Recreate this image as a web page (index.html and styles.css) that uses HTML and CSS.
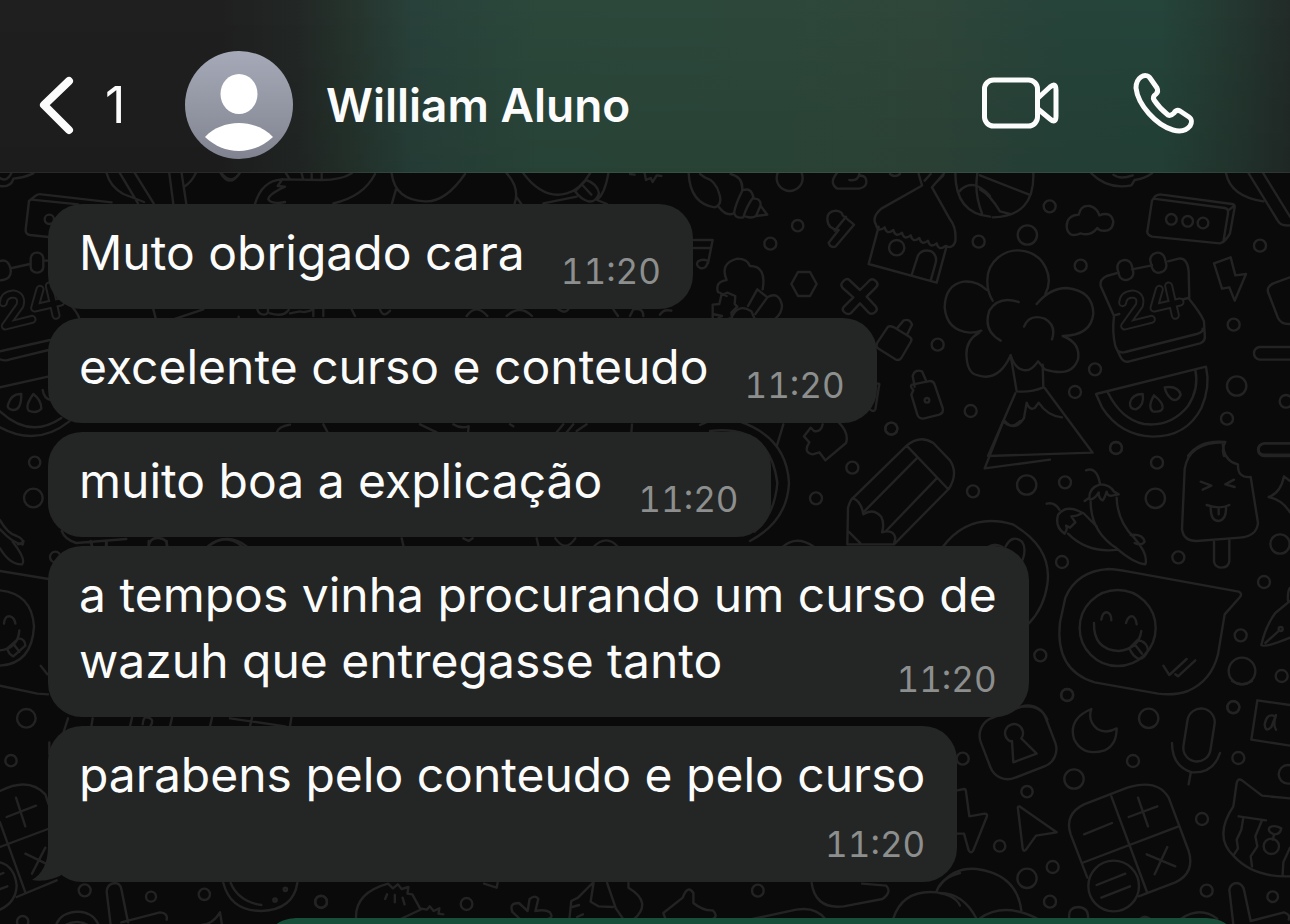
FILE: index.html
```html
<!DOCTYPE html>
<html lang="pt-BR">
<head>
<meta charset="utf-8">
<meta name="viewport" content="width=device-width, initial-scale=1">
<title>William Aluno</title>
<link rel="stylesheet" href="styles.css">
</head>
<body>
<header class="topbar">
  <button class="back" type="button" aria-label="Voltar, 1 conversa">
    <svg class="back-icon" viewBox="39 75 36 60" aria-hidden="true"><path d="M69 81 44 105l25 25"/></svg>
    <span class="back-count">1</span>
  </button>
  <svg class="avatar" viewBox="185 51 108 108" aria-hidden="true">
    <defs><linearGradient id="av" x1="0" y1="0" x2="0" y2="1"><stop offset="0" stop-color="#a6a9b7"/><stop offset="1" stop-color="#818490"/></linearGradient></defs>
    <circle cx="239" cy="105" r="54" fill="url(#av)"/>
    <ellipse cx="239" cy="94" rx="18.5" ry="20" fill="#fff"/>
    <path fill="#fff" d="M205 137C213 128 226 123 239 123S265 128 273 137C263 146 252 151 239 151S215 146 205 137Z"/>
  </svg>
  <h1 class="name">William Aluno</h1>
  <div class="actions">
    <button class="action" type="button" aria-label="Chamada de vídeo">
      <svg class="video-icon" viewBox="981 74 78 62" aria-hidden="true"><rect x="984.5" y="80" width="53" height="46" rx="9"/><path d="M1038 98 1050 87Q1056 82 1056 90V116Q1056 124 1050 119L1038 109"/></svg>
    </button>
    <button class="action" type="button" aria-label="Chamada de voz">
      <svg class="phone-icon" viewBox="1133 74 62 62" aria-hidden="true"><path d="M1141 77C1144 75 1148 75 1150 78L1157 88C1158 90 1158 92 1156 94C1153 96 1153 98 1154 100C1158 106 1163 111 1168 115C1170 116 1172 115 1174 113C1176 110 1178 110 1180 111L1189 117C1192 119 1192 123 1190 126C1186 131 1180 132 1173 130C1156 125 1138 105 1136 88C1136 83 1138 79 1141 77Z"/></svg>
    </button>
  </div>
</header>
<main class="chat">
  <svg class="wallpaper" viewBox="0 0 3870 2256" preserveAspectRatio="xMidYMin slice" aria-hidden="true">
    <!-- left edge, upper -->
    <g transform="translate(0 -21)">
      <path d="M0 36q20 14 34-14M0 60q34 4 40-22 30-2 60-16M320 22q10 40 50 62l62 24M360 22l54 90M405 22l56 90M508 22l12 92M545 22l14 92M553 62q22-14 34-40M665 22q28 36 54 0"/>
      <path d="M145 213l-55-6q-14-2-13-16l10-86 20-16q8-6 18-4l210 24M95 101l140 14"/><circle cx="148" cy="160" r="14"/>
      <path d="M0 285q26-8 32 26 4 30-32 32M36 306l54-12M134 284h14"/><rect x="92" y="260" width="38" height="60" rx="18"/>
      <g transform="translate(-418 0)">
        <path class="digit-outer" d="M428 410q2-24 30-26 28 4 20 34L434 480l80-20M538 370l-16 56 78-18M566 360l20 88"/>
        <path class="digit-inner" d="M428 410q2-24 30-26 28 4 20 34L434 480l80-20M538 370l-16 56 78-18M566 360l20 88"/>
      </g>
      <path d="M0 556l150-34M0 580q16 6 30 0l116-28M0 664l144-32M205 412q26 22 34 48"/>
      <path d="M24 716q10-34 40-32 0 50-26 48-18-4-14-16ZM100 684q-26 36-14 50 24 10 38-6 0-26-24-44ZM128 672q4 26 24 30M0 736q90 84 184 20M0 784q110 60 208-18"/>
      <circle cx="104" cy="889" r="17"/><circle cx="100" cy="996" r="28"/>
      <path d="M0 1062q22 40 50 48 24 10 18 26-30-4-68-46M460 430l8 30M520 460l90-30M716 460v-8M830 800q4-18 40-24M970 775l14 26M185 1095q10 26 44 36l150-12M275 1130v14M320 1125v18M446 1140q4-26 30-24 26 2 26 24M625 1140q50-40 100 0"/>
    </g>
    <!-- left edge, lower -->
    <g transform="translate(0 1104)">
      <path d="M0 22q30 50 66 48 14-14-28-68M54 10q20-8 16-10M0 90l146 24M0 434l112 24 32 2M0 148q96 10 102 108-6 112-102 118M12 248q2-24 18-22 14 4 16 22M0 328q54-6 58-60M22 322l34-30q20 2 20 22l-36 32q-16-8-18-24ZM40 308l18 24M122 374l20 26"/>
      <circle cx="166" cy="48" r="16"/><circle cx="79" cy="532" r="28"/><circle cx="33" cy="659" r="17"/>
      <path d="M272 0l6 20M318 0v20M446 0v18M500 0v18M620 20q60-50 120-4M190 576l14-44M274 556l4-24M390 556l6-26M428 550q2-26 16-20 20 4 8 24M510 556l6-26M630 556l6-26M690 532l166 24M750 556l6-26M870 556l4-26"/>
      <path d="M0 750q86-44 136 10l10 30M0 844l76 210M0 918l144-54M20 828l88-34M48 770l28 86M76 938l62 30M136 920l-40 78M0 964q44 12 50 70-2 50-50 72M0 1000l10-4M0 1044l22-8M50 1068l120-50M148 604v34"/>
      <circle cx="254" cy="1048" r="18"/><circle cx="453" cy="1067" r="15"/><circle cx="613" cy="1060" r="17"/><circle cx="963" cy="1082" r="18"/><circle cx="68" cy="1142" r="17"/>
      <path d="M332 1152l-12-100q2-24 24-26 16 0 20 18l20 100M364 1144l116-30q24 2 20 22M168 1152q14-38 66-40 46 2 62 40M196 1152q36-18 68 0M604 1152q34-2 56-38l6 38M670 1026q22 84 114 84 96-4 108-84M692 1026q24 56 92 66"/><circle cx="825" cy="1077" r="5"/><circle cx="856" cy="1045" r="5"/>
    </g>
    <!-- strip under the header -->
    <g transform="translate(600 -21)">
      <path d="M62 22q28 44 56 0M165 114q20-70 80-74l120 2q60 0 90-20M255 108q-40 8-50-8 0-14 50-38l-22-2 14-20M400 112q90-20 125-88M258 22l10 16M305 22l4 16M335 24v16M365 24v16M575 22q10 80 100 84 60 4 120-82M588 70l-12 42M920 22q40 44 24 90M970 22q60 80 130 60 40-10 70-60M1125 76l34-34q34 12 38 40-10 28-32 24-20-4-40-30ZM1150 60l24 26M1225 22q-10 60-34 80l30 12M950 94l14 20M1030 112l100-20M1290 24l14 2M1334 22l4 20 14-6 6 12 12-20 14 2"/>
      <path d="M172 430q4 16 20 16 14 0 12-16M210 442q40 12 56-10M270 442l30-6q20 6 40-6v20M370 430v20M455 430l10 20M540 430q10 28 30 4M800 450q28-40 62 0M920 450q40-36 76 0M1075 430q20 14 30 0M1240 430l14 20M1290 450l10-20q30-6 30 20M1380 446q10-18 34-12"/>
    </g>
    <!-- top middle -->
    <g transform="translate(2040 -21)">
      <path d="M26 22q4 90 78 102 24-8 14-40-10-40-44-50l-14-10M152 24q40 10 34 52-20 40-24 66-24 10-46-20M190 72q24-8 30 22-20 26-30 60-22 4-26-10M224 98q18 0 18 20l-14 32q-12 8-30 2M242 120l20 26-34 4"/>
      <circle cx="329" cy="36" r="39"/><path d="M470 22q-24 30 2 46h66q26-6 20-28-4-14-22-10M508 42q26 4 30-18M630 24q14 12 30 0"/>
      <path d="M442 158q0-22 26-24 18 2 20 14l34 28-56 66q-16 4-20-12l30-38q-34-4-34-34ZM498 152l-34 42M596 182l-30 112 204 56 30-110M724 60L604 128q-30 26-16 48q6 24 26 8q6 24 26 8q6 24 26 8q6 24 26 8q6 24 26 8q6 24 26 8q6 24 26 8q6 24 26 8q22 10 30-14 4-40-16-66L756 64l36-42M716 24l10 34M734 44l18-20M770 48l20-20M696 324l18-56q14-20 40-12 20 14 12 38l-14 50"/>
      <circle cx="650" cy="245" r="23"/><circle cx="353" cy="179" r="17"/><circle cx="271" cy="233" r="18"/>
      <path d="M42 222h56l-14 70M42 246h50M82 292q-4 18-22 14-14-8-6-20 14-8 28-2"/>
      <path d="M334 354l20-36h36l20 36-20 36h-36ZM488 366q-8-10 0-18 12-14 20-6l32 30 30-30q10-6 20 6 6 8-2 16l-28 28 28 30q6 8-2 16-10 10-20 2l-26-28-28 30q-10 6-20-4-8-8 0-16l28-28Z"/>
      <path d="M140 390l-26-12q-10-30 26-36-22-50 32-64 30 0 38 22 50 0 38 70M98 460v-44l20-2 6-26 18-8 24 10-2 24 8 8-18 18 2 16-22 6-18-6M98 444l28 6M204 420l28-50 30 24-36 50M262 394q34-20 44 24 0 24-20 40M158 448q20-36 56-12l10 22"/>
      <path d="M592 530l28-42q6-12 22-4l46 28q10 6 4 16l-28 48q-8 10-18 4l-50-32q-10-6-4-18ZM652 486l18-22q20-8 26 12l-14 28M700 672q-12-12-4-16l48-10q16-4 20 10l24 70q4 14-10 20l-48 12q-14 0-18-12l-18-60ZM704 662l-6-32q6-22 28-14l14 32"/><circle cx="741" cy="703" r="7"/>
      <circle cx="773" cy="536" r="18"/><circle cx="872" cy="735" r="18"/><circle cx="634" cy="788" r="18"/><circle cx="896" cy="227" r="18"/>
      <path d="M590 652l8 2-12 76q-4 10-16 0M826 22q0 120 104 130M892 22q-10 60 14 120M838 76q40-44 92 14"/>
    </g>
    <!-- top right: flower, calendar, melon -->
    <g transform="translate(2940 -21)">
      <path d="M160 22q4 130-122 132M0 70q30 16 60 66l30 8M0 28l148 58M334 22q50 50 120 36l10-16q30-4 52-20M400 26q20 16 58 2"/>
      <circle cx="209" cy="121" r="18"/><circle cx="142" cy="207" r="29"/><circle cx="302" cy="299" r="18"/>
      <path d="M296 146q6-30 34-26 22 6 28 28 36-14 42 20-4 30-32 26-10 0-16-8-20 26-50 16-38 16-42-20 0-34 36-36ZM526 90q10-6 20-4l210 28q10 2 8 10l-14 78q-14 26-30 30l-204-20q-16-6-14-16l14-92ZM520 98l214 28q12 2 10 16l-14 86M744 134l18-14"/>
      <circle cx="574" cy="160" r="16"/><circle cx="623" cy="166" r="16"/><circle cx="669" cy="171" r="16"/>
      <path d="M738 22q14 70 112 84M806 22l86 140q10 20 38 16M850 22l80 130"/>
      <circle cx="840" cy="239" r="18"/><circle cx="761" cy="476" r="18"/><circle cx="770" cy="660" r="29"/><circle cx="741" cy="758" r="18"/><circle cx="345" cy="610" r="18"/><circle cx="285" cy="678" r="18"/><circle cx="408" cy="846" r="18"/><circle cx="918" cy="706" r="19"/>
      <path d="M38 404Q22 380 22 346A92 90 0 1 1 196 384M170 414q40-48 90-48 78 8 80 76-6 66-92 68 54 20 46 70-20 56-100 30l-20-24q-24 36-50 24-20-6-32-42-36 80-98 60M20 372q-28-28-70-25-54 10-56 77 6 70 76 76 20 0 34-6M-2 500q-44 24-38 76 4 48 34 52M116 408q-60-20-88 26-20 60 34 90M132 482q16-40 62-24 36 20 22 62"/>
      <path d="M92 568l18 108q42 4 80-12l-2-68M106 682L24 870l314-10L194 666M74 764q30 36 58-8l8-46q8 24 24 16l12-16q26 40 70 44"/>
      <path d="M416 320l-36 10q-22 10-18 30l40 90q-6 50 4 90l14 30q10 22 28 16l212-54q18-6 14-28l-2-38q-10-24-44-66l-2-84q-4-42-30-38l-32 8M456 310l60-12M402 448l16-4M596 404l28-8M416 556q10 6 20 2l214-54q20-6 18-16"/>
      <rect x="414" y="282" width="44" height="60" rx="21" transform="rotate(-14 436 312)"/><rect x="513" y="260" width="44" height="60" rx="21" transform="rotate(-14 535 290)"/>
      <path class="digit-outer" d="M428 410q2-24 30-26 28 4 20 34L434 480l80-20M538 370l-16 56 78-18M566 360l20 88"/>
      <path class="digit-inner" d="M428 410q2-24 30-26 28 4 20 34L434 480l80-20M538 370l-16 56 78-18M566 360l20 88"/>
      <path d="M702 292l50-18 14 54 32-4-34 80-16-40-22 4ZM930 334l-50 18q-20 10-16 26l30 78q10 20 36 18"/>
      <path d="M348 684l330-82q14 60-14 124-44 86-146 86-98-4-152-88ZM384 680q40 80 108 94 80 10 132-54 34-52 22-108M450 710q6-26 38-26 6 34-20 46-20 0-18-20ZM522 688q-20 34-4 48 26 4 30-10 2-16-26-38ZM554 664q40-6 48 22-10 24-28 12-16-12-20-34Z"/>
      <path d="M930 543h-92q-16 4-16 19t16 19h92M930 832h-76q-18 4-18 19t18 15h76M624 870q36-50 112-42-12 20-4 42"/>
    </g>
    <!-- centre right: pencil, puzzle -->
    <g transform="translate(2220 744)">
      <path d="M-120 12Q-60-20 0 2 140 50 147 186 142 300 30 360M-90 30Q90 10 112 186 104 282 44 332M130 10l-20 66M248 10q-4 24-26 20l-10-10-20 26 16 18q-20 30 10 36l20-6 18 24 62-52q10-30-22-62"/>
      <circle cx="454" cy="23" r="18"/><circle cx="337" cy="140" r="18"/><circle cx="228" cy="232" r="18"/><circle cx="699" cy="211" r="18"/><circle cx="860" cy="192" r="29"/><circle cx="901" cy="703" r="18"/>
      <path d="M500 74q40-34 80-8l50 52q26 40-4 86L462 370H322l2-110q8-26 16-30ZM500 74l124 130M530 112L374 270M590 172L438 330M340 232q24 10 30 48 30-20 54 8 10 20 2 46 34-10 40 16l-4 20M326 332l36 36M128 378q40-36 92-2M790 0l-56 142 196-26M790 0q24 28 50 0"/>
      <path d="M608 378q80-106 210-68 120 70 104 180-10 70-56 118M744 378q20-14 44 0M796 378q20-40 50-16 14 20 2 54M766 884q60-26 90-28 50 0 66 40"/>
    </g>
    <!-- right edge: peppers, lolly, sticker -->
    <g transform="translate(3060 804)">
      <circle cx="288" cy="21" r="18"/><circle cx="411" cy="65" r="18"/><circle cx="135" cy="124" r="18"/><circle cx="406" cy="172" r="29"/><circle cx="475" cy="349" r="18"/><circle cx="126" cy="363" r="18"/><circle cx="142" cy="762" r="18"/><circle cx="732" cy="423" r="18"/><circle cx="662" cy="583" r="18"/><circle cx="666" cy="690" r="40"/><circle cx="785" cy="705" r="18"/><circle cx="780" cy="309" r="29"/><circle cx="640" cy="798" r="18"/>
      <path d="M198 88q32-12 42 40M194 180l14-10q0-30 32-40 30 0 42 22l14 8-20 4q-14 2-16-12-6 20-12 26-12-4-12-24-10 20-26 22M212 182q0 90 78 140 50 44 86 48 10-30-34-80-50-50-52-120M80 188q24-6 38 18M134 278q-30-20-20-56 24-34 74-6l-18 8-16 2 12 18-16 16-12-6q6 10-4 24ZM190 216l40 40M144 278q60 60 150 48M332 282q36-4 42 20-10 14-30 4"/>
      <path d="M612 4q-106 0-118 80l-8 180q4 36 44 36l130-10q50-4 54-44l-22-138q-40 4-38-38-44-10-46-66ZM582 302v60q4 18 24 18 20-2 22-20v-64M542 122l32 12-26 12M642 116l-26 14 28 8M560 192q40 14 68 0M572 200q0 40 24 40 24-4 22-42M596 202v18M810 120l-18-14q-10 50-46 62 40 8 64 46"/>
      <rect x="714" y="7" width="130" height="38" rx="19"/>
      <path d="M136 470q34-80 130-86 20 0 60 8l330 60q12 6 4 16l-46 52-20 120q-20 80-90 110-40 14-90 8l-190-34q-120-36-104-180Z"/><circle cx="293" cy="561" r="114"/>
      <path d="M244 536q4-24 18-22 12 4 12 24M318 546q6-22 20-20 10 6 12 24M222 546q-2 80 74 84 60-6 68-60M328 622l26-26q30 10 30 32-12 28-28 26-18-8-28-32ZM344 610l22 28M430 674l18 28 52-48M466 700l8 6 52-48"/>
      <path d="M810 480l-44 36q-30 40-42 96 8 10 86-22M736 606l42-38"/><circle cx="782" cy="564" r="6"/><path d="M810 440q-8 10-6 40"/>
    </g>
    <!-- lower right: padlock, moon, calculator, cat -->
    <g transform="translate(2820 1524)">
      <circle cx="381" cy="42" r="18"/><circle cx="626" cy="112" r="29"/><circle cx="68" cy="233" r="18"/><circle cx="579" cy="240" r="18"/><circle cx="402" cy="294" r="29"/><circle cx="261" cy="332" r="17"/><circle cx="179" cy="495" r="17"/><circle cx="338" cy="558" r="18"/><circle cx="261" cy="592" r="29"/><circle cx="330" cy="662" r="18"/><circle cx="786" cy="414" r="18"/><circle cx="800" cy="629" r="18"/><circle cx="880" cy="79" r="18"/><circle cx="895" cy="231" r="18"/><circle cx="998" cy="647" r="16"/><circle cx="1044" cy="280" r="28"/>
      <rect x="130" y="88" width="208" height="192" rx="56" transform="rotate(-21 234 184)"/>
      <path d="M214 182A27 27 0 1 1 244 172M216 180l4 64 70-26-46-46M454 84q-70 30-52 90 26 54 92 34 36-16 36-66-30 18-58 2-30-24-18-60Z"/>
      <rect x="736" y="82" width="82" height="160" rx="41" transform="rotate(9 777 162)"/>
      <path d="M696 186q0 70 60 88 64 4 84-58M752 276l-6 34M1050 72l-98-14-18 118 116 18M1000 104q-20-6-26 26 2 26 20 8l14-36q-10 30 0 44M876 0q30 20 60 0"/>
      <path d="M52 328l20-4q6 0 6 8l10 74 46-8q10 0 6 10l-40 100q-8 12-14 0l-14-50H52M238 376l112 78-62 10-30 42q-8 8-10-4l-14-118q-2-8 4-8Z"/>
      <path d="M442 590L392 460q-20-60 40-90l130-50q90-28 124 30l60 160q20 66-40 94l-110 42M514 346l108 290M426 546l290-110M432 460l84-34M566 408l86-32M594 350l30 86M620 520l86 36M682 498l-38 82M470 612l86-34M484 650l86-34"/><circle cx="521" cy="615" r="76"/>
      <path d="M880 376l10-70q4-16 16-8l60 46 84 8M880 376q-60 90 0 148 60 66 170 62M896 406l82 12M910 410l-6 36-14 30 4 26-14 22M966 418l-20 48 6 30-20 30 4 30M1050 500l-20 44-2 36M988 440q14-10 36 2-4 20-22 18-20-8-14-20M1002 462l-4 14"/><circle cx="994" cy="496" r="23"/>
      <path d="M0 614q40-56 110-50 120 16 134 124M0 636q70 0 110 78M120 712q70-50 170 0M388 714q-6-36 30-36 30 4 26 36M600 714q14-14 30 0M722 714q60-40 110 0M880 730l-12-104q4-20 24-20 16 4 20 20l20 94 100-26q20 6 14 22"/>
    </g>
    <!-- bottom strip -->
    <g transform="translate(600 2064) scale(1.454 1)">
      <path d="M322 176q-4-80 66-108l10 14 10-12 8 14 14-6-2 20 10 2 16 42 14 4 6-10 8 14 12-8-2 16 10 2M386 100l-4 14M402 102v22M418 110l4 20M414 174l44-30M586 68l26 12 2-14M644 150q-6-24 14-24l18 24 4-36q12-14 18 0l-6 36q20-6 30 4 8 16-4 20M660 174l-16-22M762 176l4-56 14-10 30-44M812 66l-6 56 16 14 30 2M840 66l18 76 16 34M782 132l-14 6M790 160l-12 8M884 66v14q50 44 12 94M960 172l-4-16 40-46q10-40 22-14v30q20 24 40 22 12 16 0 26M1262 66q8 80 66 70l80-22q20-20 8-40l-50-6M1140 174l90-28q40-10 60 28M1430 174q20-90 90-80 40 10 48 40M1520 90q10-40 48-54"/>
      <ellipse cx="250" cy="123" rx="12" ry="18"/><ellipse cx="550" cy="129" rx="12" ry="18"/><ellipse cx="1151" cy="89" rx="12" ry="18"/>
    </g>
    <g transform="translate(1200 684)">
      <path d="M60 70l50 24M160 70q20 14 46 6l-2 20M330 70l10 6M470 94l20-24M500 94l20-24M530 90l30-20M696 70l-2 26M5 412l6 26M190 412l16 8 12-8M410 412l6 26M466 412q30 44 60 0M580 438q40-40 74 0"/>
    </g>
  </svg>
  <section class="messages" aria-label="Mensagens">
    <article class="bubble"><p class="text">Muto obrigado cara</p><time class="time">11:20</time></article>
    <article class="bubble"><p class="text">excelente curso e conteudo</p><time class="time">11:20</time></article>
    <article class="bubble"><p class="text">muito boa a explicação</p><time class="time">11:20</time></article>
    <article class="bubble bubble-shared"><p class="text">a tempos vinha procurando um curso de<br>wazuh que entregasse tanto</p><time class="time">11:20</time></article>
    <article class="bubble bubble-stacked">
      <p class="text">parabens pelo conteudo e pelo curso</p><time class="time">11:20</time>
      <svg class="tail" viewBox="0 0 34 36" aria-hidden="true"><path d="M17 0C17 18 11 28 1 34c12 2 23-1 31-6V0Z"/></svg>
    </article>
    <div class="bubble-sent"></div>
  </section>
</main>
</body>
</html>
```
FILE: styles.css
```css
* { box-sizing: border-box; }

body {
  margin: 0;
  height: 100vh;
  display: flex;
  flex-direction: column;
  overflow: hidden;
  background: #0a0a0a;
  color: #fcfcfc;
  font-family: Inter, "Liberation Sans", sans-serif;
}

button {
  padding: 0;
  border: 0;
  background: none;
  color: inherit;
  font: inherit;
}

svg { display: block; }

.topbar {
  flex: none;
  display: flex;
  align-items: center;
  padding: 51px 95px 13px 39px;
  border-bottom: 1px solid #ffffff0c;
  background:
    linear-gradient(180deg, #00000000, #00000018),
    linear-gradient(90deg, #1f1f1f 0, #1f1f1f 17%, #222725 23%, #25332c 27%, #28413a 32%, #2b483b 42%, #2d483b 60%, #2f463a 72%, #29443a 79%, #26443a 83%, #25443a 90%, #243931 95%, #222b28 100%);
}

.back {
  display: flex;
  align-items: center;
  width: 146px;
  gap: 30px;
  text-align: left;
}

.back-icon {
  width: 36px;
  height: 60px;
  fill: none;
  stroke: #fcfcfc;
  stroke-width: 8;
  stroke-linecap: round;
  stroke-linejoin: round;
}

.back-count { font-size: 50px; }

.avatar { width: 108px; height: 108px; }

.name {
  flex: 1;
  margin: 0 0 0 33px;
  font-size: 46px;
  font-weight: 600;
  line-height: 60px;
  white-space: nowrap;
}

.actions { display: flex; gap: 74px; }

.video-icon, .phone-icon {
  height: 62px;
  overflow: visible;
  fill: none;
  stroke: #fcfcfc;
  stroke-width: 5;
  stroke-linecap: round;
  stroke-linejoin: round;
}

.video-icon { width: 78px; }
.phone-icon { width: 62px; }

.chat {
  position: relative;
  flex: 1;
  min-height: 0;
  overflow: hidden;
}

.wallpaper {
  position: absolute;
  inset: 0;
  width: 100%;
  height: 100%;
  fill: none;
  stroke: #232324;
  stroke-width: 2.4;
  stroke-linejoin: round;
  stroke-linecap: round;
}

.wallpaper * { vector-effect: non-scaling-stroke; }
.digit-outer { stroke-width: 9; }
.digit-inner { stroke: #0a0a0a; stroke-width: 5; }

.messages {
  position: relative;
  display: flex;
  flex-direction: column;
  align-items: flex-start;
  gap: 9px;
  padding: 31px 49px 0 48px;
}

.bubble {
  position: relative;
  display: flex;
  justify-content: space-between;
  align-items: flex-end;
  gap: 36px;
  padding: 16px 32px 23px 31px;
  border-radius: 34px;
  background: #242625;
}

.text {
  margin: 0;
  font-size: 48px;
  line-height: 66px;
}

.time {
  color: #8d8f8e;
  font-size: 35px;
  font-variant-numeric: tabular-nums;
  line-height: 30px;
}

.bubble-shared { display: grid; }
.bubble-shared > * { grid-area: 1 / 1; }
.bubble-shared .time { justify-self: end; }

.bubble-stacked {
  flex-direction: column;
  gap: 21px;
}

.tail {
  position: absolute;
  left: -17px;
  bottom: 0;
  width: 34px;
  height: 36px;
  fill: #242625;
  stroke: none;
}

.bubble-sent {
  align-self: stretch;
  height: 105px;
  margin: 27px 0 0 214px;
  border-radius: 34px;
  background: #184f3b;
}
```
